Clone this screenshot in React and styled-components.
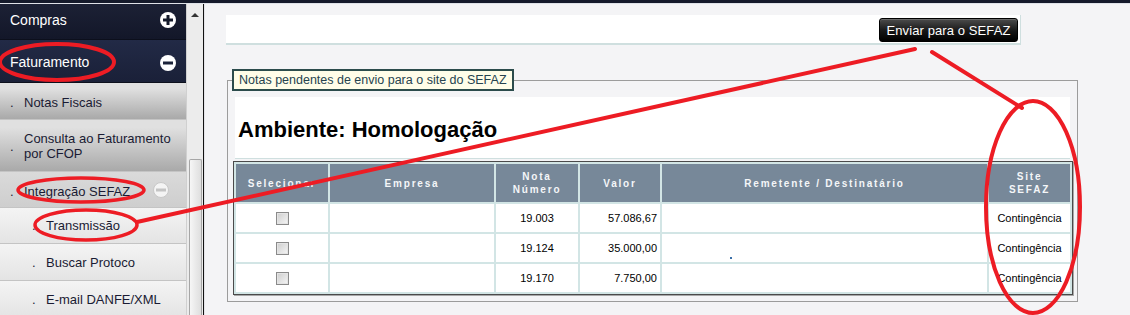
import React from "react";
import styled, { createGlobalStyle } from "styled-components";

const GlobalStyle = createGlobalStyle`
    html, body {
        margin: 0;
        padding: 0;
        overflow: hidden;
        background: #f4f4f6;
        font-family: "Liberation Sans", Arial, sans-serif;
    }
`

const Page = styled.div`
    position: relative;
    width: 1130px;
    height: 315px;
    overflow: hidden;
`
const TopBar = styled.div`
    height: 3px;
    background: #151a2b;
    border-bottom: 1px solid #dfe2e8;
`
const Body = styled.div`
    display: flex;
    height: 311px;
`
const Sidebar = styled.nav`
    width: 186px;
    flex-shrink: 0;
    display: flex;
    flex-direction: column;
`
const Item = styled.div`
    display: flex;
    align-items: ${(p) => (p.$wrap ? "flex-start" : "center")};
    flex-shrink: 0;
    height: ${(p) => p.$h}px;
    box-sizing: border-box;
    padding-left: ${(p) => (p.$level === "sub" ? 32 : 10)}px;
    padding-top: ${(p) => p.$pt || 0}px;
    padding-bottom: ${(p) => p.$pb || 0}px;
    padding-right: 10px;
    font-size: ${(p) => (p.$level === "top" ? 14 : 13)}px;
    line-height: 15px;
    color: ${(p) => (p.$level === "top" ? "#ffffff" : "#1a1b33")};
    background: ${(p) =>
        p.$level === "top"
            ? p.$open
                ? "linear-gradient(#222a46, #1a2038)"
                : "linear-gradient(#1c2135, #131729)"
            : p.$level === "group"
            ? p.$open
                ? "linear-gradient(#dadada, #cecece)"
                : "linear-gradient(#e0e0e0 15%, #a9a9a9)"
            : "linear-gradient(#f4f4f4, #e4e4e4)"};
    border-bottom: 1px solid ${(p) => (p.$level === "top" ? "#0c0f1c" : "#c4c4c4")};
`
const Dot = styled.span`
    width: 14px;
    flex-shrink: 0;
`
const Label = styled.span`
    flex: 1;
    max-width: 150px;
`
const Toggle = styled.span`
    width: 16px;
    height: 16px;
    border-radius: 50%;
    flex-shrink: 0;
    margin-right: ${(p) => (p.$soft ? 7 : 0)}px;
    background: ${(p) => (p.$soft ? "#f4f4f4" : "#ffffff")};
    border: ${(p) => (p.$soft ? "1px solid #c8c8c8" : "none")};
    box-sizing: border-box;
    display: flex;
    align-items: center;
    justify-content: center;
    svg {
        display: block;
    }
`
const Scroll = styled.div`
    width: 17px;
    flex-shrink: 0;
    background: #ececec;
    border-left: 1px solid #d0d0d0;
    box-sizing: border-box;
    display: flex;
    flex-direction: column;
    align-items: center;
`
const ArrowUp = styled.div`
    margin-top: 9px;
    width: 0;
    height: 0;
    border-left: 4px solid transparent;
    border-right: 4px solid transparent;
    border-bottom: 4px solid #333;
`
const Thumb = styled.div`
    margin-top: auto;
    width: 13px;
    height: 156px;
    box-sizing: border-box;
    border: 1px solid #a6a6a6;
    border-bottom: none;
    border-radius: 2px 2px 0 0;
    background: linear-gradient(90deg, #f6f6f6, #dedede);
`
const Divider = styled.div`
    width: 1px;
    flex-shrink: 0;
    background: #111;
`
const Main = styled.main`
    flex: 1;
    background: #f4f4f6;
    padding: 11px 0 0 21px;
    border-left: 1px solid #e4e4e8;
`
const ActionBox = styled.div`
    width: 795px;
    height: 30px;
    box-sizing: border-box;
    background: #ffffff;
    border-bottom: 2px solid #cfdfdf;
    border-right: 1px solid #cfdfdf;
    display: flex;
    justify-content: flex-end;
    align-items: flex-start;
    padding: 3px 2px 0 0;
`
const SendButton = styled.button`
    height: 24px;
    width: 139px;
    padding: 0;
    border: 1px solid #000;
    border-radius: 3px;
    background: linear-gradient(#4c4c4c, #161616 55%, #000);
    color: #ffffff;
    font-family: "Liberation Sans", Arial, sans-serif;
    font-size: 13px;
    letter-spacing: 0.1px;
    box-shadow: inset 0 1px 0 #6a6a6a;
`
const Panel = styled.fieldset`
    width: 851px;
    box-sizing: border-box;
    margin: 24px 0 0 1px;
    padding: 6px 7px 6px;
    border: 1px solid #9c9c9c;
    min-width: 0;
`
const Legend = styled.legend`
    margin-left: -3px;
    padding: 0 5px;
    height: 22px;
    box-sizing: border-box;
    line-height: 18px;
    font-size: 12.5px;
    color: #26434f;
    background: #fffde8;
    border: 2px solid #2c4c4c;
`
const Heading = styled.div`
    background: #ffffff;
    height: 62px;
    box-sizing: border-box;
    border-bottom: 1px solid #cfdfdf;
    padding: 20px 0 0 3px;
`
const Title = styled.h2`
    margin: 0;
    font-size: 22px;
    line-height: 26px;
    font-weight: bold;
    color: #000;
`
const Grid = styled.table`
    margin: 2px -2px 0;
    width: 839px;
    border-collapse: separate;
    border-spacing: 2px;
    background: #d2e5e5;
    border: 1px solid #4a4a4a;
    box-shadow: 1px 1px 0 #a8a8a8;
    table-layout: fixed;
`
const Th = styled.th`
    height: 38px;
    padding: 0;
    background: #778899;
    color: #f4f6f8;
    font-size: 10px;
    line-height: 13px;
    letter-spacing: 1.8px;
    font-weight: bold;
    text-align: center;
`
const Td = styled.td`
    height: 28px;
    padding: 0 3px;
    background: #ffffff;
    color: #000;
    font-size: 11px;
    text-align: ${(p) => p.$align || "center"};
`
const Check = styled.span`
    display: inline-block;
    vertical-align: middle;
    width: 13px;
    height: 13px;
    box-sizing: border-box;
    border: 1px solid #8a8a8a;
    background: linear-gradient(135deg, #cdcdcd, #f6f6f6);
    box-shadow: inset 0 0 0 1px #e4e4e4;
`
const Speck = styled.span`
    display: inline-block;
    width: 2px;
    height: 2px;
    margin: 20px 0 0 68px;
    background: #3a6fa8;
    vertical-align: top;
`
const Marks = styled.svg`
    position: absolute;
    left: 0;
    top: 0;
    pointer-events: none;
`

const Plus = ({ minus, color }) => (
    <svg width="10" height="10" viewBox="0 0 10 10">
        <rect x="0" y="3.5" width="10" height="3" fill={color} />
        {!minus && <rect x="3.5" y="0" width="3" height="10" fill={color} />}
    </svg>
)

const rows = [
    { nota: "19.003", valor: "57.086,67" },
    { nota: "19.124", valor: "35.000,00", speck: true },
    { nota: "19.170", valor: "7.750,00" },
]

export default function App() {
    return (
        <Page>
            <GlobalStyle />
            <TopBar />
            <Body>
                <Sidebar>
                    <Item $level="top" $h={36} $pb={3}>
                        <Label>Compras</Label>
                        <Toggle><Plus color="#151a2b" /></Toggle>
                    </Item>
                    <Item $level="top" $open $h={43} $pt={3}>
                        <Label>Faturamento</Label>
                        <Toggle><Plus minus color="#1b2239" /></Toggle>
                    </Item>
                    <Item $level="group" $h={37} $pt={2}>
                        <Dot>.</Dot>
                        <Label>Notas Fiscais</Label>
                    </Item>
                    <Item $level="group" $wrap $h={52} $pt={11}>
                        <Dot style={{ paddingTop: 8 }}>.</Dot>
                        <Label>Consulta ao Faturamento por CFOP</Label>
                    </Item>
                    <Item $level="group" $open $h={36} $pt={4}>
                        <Dot>.</Dot>
                        <Label>Integração SEFAZ</Label>
                        <Toggle $soft style={{ marginTop: -3 }}><Plus minus color="#c4c4c4" /></Toggle>
                    </Item>
                    <Item $level="sub" $h={36}>
                        <Dot>.</Dot>
                        <Label>Transmissão</Label>
                    </Item>
                    <Item $level="sub" $h={37}>
                        <Dot>.</Dot>
                        <Label>Buscar Protoco</Label>
                    </Item>
                    <Item $level="sub" $h={37}>
                        <Dot>.</Dot>
                        <Label>E-mail DANFE/XML</Label>
                    </Item>
                </Sidebar>
                <Scroll>
                    <ArrowUp />
                    <Thumb />
                </Scroll>
                <Divider />
                <Main>
                    <ActionBox>
                        <SendButton>Enviar para o SEFAZ</SendButton>
                    </ActionBox>
                    <Panel>
                        <Legend>Notas pendentes de envio para o site do SEFAZ</Legend>
                        <Heading>
                            <Title>Ambiente: Homologação</Title>
                        </Heading>
                        <Grid>
                            <colgroup>
                                <col style={{ width: 92 }} />
                                <col style={{ width: 164 }} />
                                <col style={{ width: 82 }} />
                                <col style={{ width: 80 }} />
                                <col style={{ width: 325 }} />
                                <col style={{ width: 81 }} />
                            </colgroup>
                            <thead>
                                <tr>
                                    <Th>Selecionar</Th>
                                    <Th>Empresa</Th>
                                    <Th>Nota<br />Número</Th>
                                    <Th>Valor</Th>
                                    <Th>Remetente / Destinatário</Th>
                                    <Th>Site<br />SEFAZ</Th>
                                </tr>
                            </thead>
                            <tbody>
                                {rows.map((r) => (
                                    <tr key={r.nota}>
                                        <Td><Check /></Td>
                                        <Td></Td>
                                        <Td>{r.nota}</Td>
                                        <Td $align="right">{r.valor}</Td>
                                        <Td $align="left" style={{ padding: 0 }}>{r.speck && <Speck />}</Td>
                                        <Td>Contingência</Td>
                                    </tr>
                                ))}
                            </tbody>
                        </Grid>
                    </Panel>
                </Main>
            </Body>
            <Marks width="1130" height="315" viewBox="0 0 1130 315">
                <g fill="none" stroke="#ed1c24" strokeLinecap="round">
                    <ellipse cx="57" cy="62" rx="57" ry="18" strokeWidth="4" />
                    <ellipse cx="81" cy="190" rx="63" ry="12" strokeWidth="3.5" />
                    <ellipse cx="86" cy="225" rx="51" ry="15" strokeWidth="3.5" />
                    <line x1="137" y1="222" x2="915" y2="49" strokeWidth="4" />
                    <line x1="932" y1="52" x2="1022" y2="108" strokeWidth="4" />
                    <ellipse cx="1033" cy="207" rx="47" ry="106" strokeWidth="4" />
                </g>
            </Marks>
        </Page>
    );
}
